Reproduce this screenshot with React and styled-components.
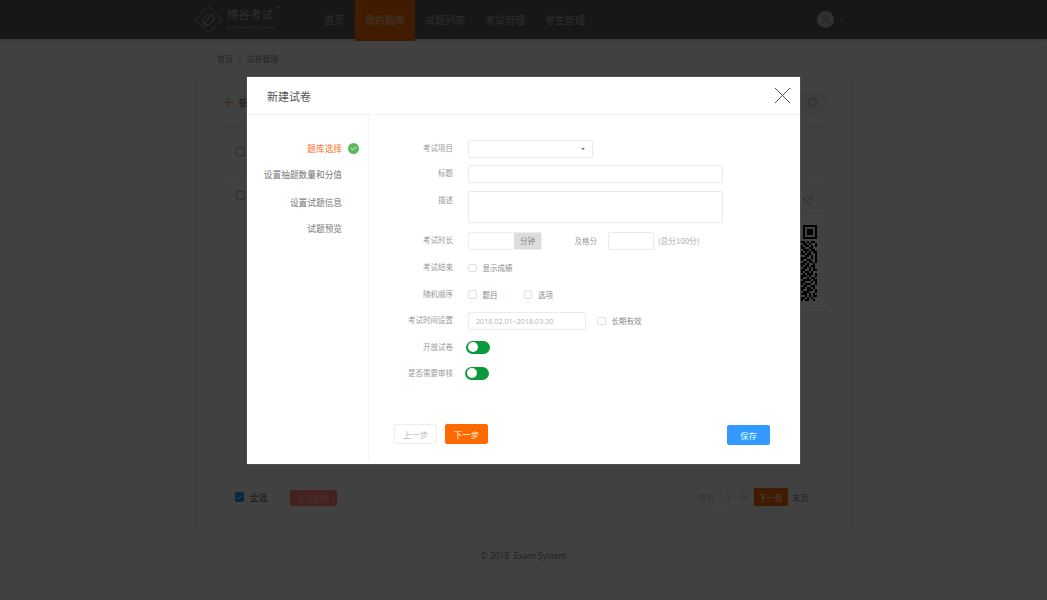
import React from "react";
import styled, { createGlobalStyle } from "styled-components";
import { Search, Send, Plus, Check, User, X } from "lucide-react";

const Global = createGlobalStyle`
  html, body { margin: 0; padding: 0; height: 100%; background: #eee; }
  body { font-family: "Noto Sans CJK SC", "Open Sans", "Noto Sans", sans-serif; overflow: hidden; }
  * { box-sizing: border-box; }
`;

const Page = styled.div`
  position: relative;
  width: 1047px;
  height: 600px;
  overflow: hidden;
  background: #eee;
`;
const Header = styled.header`
  height: 39px;
  background: #555;
  display: flex;
  padding-left: 194px;
  padding-right: 204px;
  box-shadow: 0 1px 2px rgba(0,0,0,.2);
`;
const Logo = styled.div`
  display: flex;
  align-items: center;
  gap: 4px;
  width: 120px;
  color: #aaa;
`;
const LogoText = styled.div`
  display: flex;
  flex-direction: column;
  line-height: 1;
`;
const LogoName = styled.span`
  font-size: 11.5px;
  position: relative;
  width: 47px;
  margin-bottom: 4px;
  sup {
    position: absolute;
    left: 48px;
    top: -7px;
    font-family: "Open Sans", sans-serif;
    font-size: 10px;
    font-weight: 300;
  }
`;
const LogoSub = styled.span`
  font-family: "Open Sans", sans-serif;
  font-size: 5.2px;
  color: #999;
  white-space: nowrap;
`;
const Nav = styled.nav`
  display: flex;
  flex: 1;
`;
const NavItem = styled.a`
  height: 41px;
  padding: 0 10px;
  line-height: 40px;
  font-size: 10px;
  color: ${(p) => (p.$active ? "#d8c8b8" : "#aaa")};
  background: ${(p) => (p.$active ? "#f06400" : "transparent")};
  &:first-child { margin-right: 1px; }
`;
const UserBox = styled.div`
  display: flex;
  align-items: center;
  gap: 5px;
`;
const Avatar = styled.div`
  width: 17px;
  height: 17px;
  border-radius: 50%;
  background: #b4b4b4;
  color: #666;
  display: flex;
  align-items: center;
  justify-content: center;
`;
const Caret = styled.i`
  width: 0;
  height: 0;
  border: 2px solid transparent;
  border-top-color: ${(p) => p.$color || "#888"};
  border-bottom: 0;
`;
const Crumbs = styled.div`
  height: 38px;
  padding: 0 0 0 217px;
  display: flex;
  align-items: center;
  gap: 5px;
  font-size: 8px;
  color: #888;
`;
const Card = styled.section`
  width: 656px;
  height: 456px;
  margin: 0 auto;
  background: #f1f1f1;
  border: 1px solid #eee;
  display: flex;
  flex-direction: column;
  box-shadow: 0 1px 2px rgba(0,0,0,.05);
`;
const Toolbar = styled.div`
  height: 50px;
  margin: 0 24px;
  border-bottom: 1px solid #e6e6e6;
  display: flex;
  align-items: center;
  justify-content: space-between;
  font-size: 10px;
  color: #777;
  padding-left: 27px;
`;
const NewBtn = styled.div`
  display: flex;
  align-items: center;
  gap: 4px;
  margin-left: -26px;
  color: #ff9800;
  span { color: #666; }
`;
const SearchPill = styled.div`
  width: 90px;
  height: 20px;
  margin-right: -1px;
  border-radius: 10px;
  background: #e4e4e4;
  color: #888;
  display: flex;
  align-items: center;
  justify-content: flex-end;
  padding-right: 9px;
`;
const ListRow = styled.div`
  margin: 0 24px;
  padding: ${(p) => p.$pad};
  height: ${(p) => p.$h}px;
  border-bottom: ${(p) => (p.$line ? "1px solid #e6e6e6" : "0")};
  display: flex;
  justify-content: space-between;
`;
const Check0 = styled.i`
  display: block;
  width: 9px;
  height: 9px;
  margin-left: 15px;
  margin-top: ${(p) => p.$mt || 0}px;
  border: 1px solid #aaa;
  border-radius: 2px;
`;
const QrCol = styled.div`
  display: flex;
  flex-direction: column;
  align-items: flex-end;
  color: #888;
`;
const QrBox = styled.div`
  width: 100px;
  height: 99px;
  margin-top: 7px;
  margin-right: -2px;
  padding: 11px;
  background: #f4f4f4;
  border: 1px solid #e4e4e4;
`;
const BulkBar = styled.div`
  margin-top: auto;
  height: 42px;
  padding: 0 37px 0 38px;
  display: flex;
  align-items: flex-start;
  font-size: 9px;
  color: #555;
`;
const CheckedBox = styled.i`
  width: 9px;
  height: 10px;
  margin-top: 2px;
  margin-right: 6px;
  background: #2a8fe0;
  border-radius: 2px;
  color: #fff;
  display: flex;
  align-items: center;
  justify-content: center;
`;
const BulkLabel = styled.span`
  margin-right: 22.5px;
  line-height: 15px;
`;
const DangerBtn = styled.button`
  width: 47px;
  height: 16px;
  padding: 0;
  border: 0;
  border-radius: 2px;
  background: #ff7878;
  color: #ffb0b0;
  font: inherit;
  font-size: 8px;
`;
const Pager = styled.div`
  margin-left: auto;
  margin-top: -2px;
  display: flex;
  font-size: 8px;
`;
const PageBtn = styled.span`
  height: 18px;
  line-height: 17px;
  padding: 0 4px;
  border: 1px solid ${(p) => (p.$on ? "#f06400" : "#eaeaea")};
  background: ${(p) => (p.$on ? "#f06400" : "transparent")};
  color: ${(p) => (p.$on ? "#fff" : p.$dim ? "#bbb" : "#777")};
`;
const Foot = styled.footer`
  text-align: center;
  margin-top: 17px;
  font-size: 8.5px;
  font-family: "Open Sans", sans-serif;
  color: #777;
`;

const Overlay = styled.div`
  position: absolute;
  inset: 0;
  background: rgba(0, 0, 0, 0.73);
  display: flex;
  justify-content: center;
  padding-top: 77px;
`;
const Modal = styled.div`
  width: 553px;
  height: 387px;
  background: #fff;
  display: flex;
  flex-direction: column;
  box-shadow: 0 0 1px rgba(255,255,255,.5);
`;
const ModalHead = styled.div`
  height: 38px;
  flex: none;
  padding: 0 3px 0 20px;
  border-bottom: 1px solid #f2f2f2;
  display: flex;
  align-items: center;
  justify-content: space-between;
  font-size: 11px;
  color: #555;
`;
const CloseBtn = styled.span`
  display: flex;
  color: #333;
`;
const ModalBody = styled.div`
  flex: 1;
  display: flex;
  min-height: 0;
`;
const Steps = styled.ol`
  width: 122px;
  flex: none;
  margin: 0 0 4px;
  padding: 26px 26px 0 0;
  list-style: none;
  border-right: 1px solid #f4f4f4;
  font-size: 8.7px;
  color: #777;
  text-align: right;
`;
const Step = styled.li`
  position: relative;
  height: ${(p) => p.$h}px;
  line-height: 16px;
  white-space: nowrap;
  color: ${(p) => (p.$active ? "#ff6a1f" : "#777")};
`;
const StepMark = styled.span`
  position: absolute;
  right: -17px;
  top: 2px;
  width: 11px;
  height: 11px;
  border-radius: 50%;
  background: #5cb85c;
  color: #fff;
  display: flex;
  align-items: center;
  justify-content: center;
`;
const FormArea = styled.div`
  flex: 1;
  display: flex;
  flex-direction: column;
  padding: 25px 30px 0 0;
`;
const Row = styled.div`
  display: flex;
  align-items: ${(p) => (p.$top ? "flex-start" : "center")};
  min-height: 17.5px;
  margin-bottom: ${(p) => p.$mb ?? 9}px;
`;
const Label = styled.label`
  width: 84px;
  flex: none;
  margin-right: 15px;
  padding-bottom: 2px;
  text-align: right;
  font-size: 7.5px;
  color: #999;
  white-space: nowrap;
  line-height: ${(p) => (p.$top ? "17px" : "inherit")};
`;
const Field = styled.div`
  width: ${(p) => p.$w}px;
  height: ${(p) => p.$h || 17.5}px;
  flex: none;
  margin-left: ${(p) => p.$ml || 0}px;
  padding: 0 7px;
  border: 1px solid #ebebeb;
  border-radius: 2px;
  display: flex;
  align-items: center;
  justify-content: ${(p) => (p.$end ? "flex-end" : "flex-start")};
  font-size: 7.2px;
  color: #b4b4b4;
  font-family: "Open Sans", sans-serif;
  background: #fff;
`;
const AddonField = styled.div`
  width: 74px;
  height: 17.5px;
  display: flex;
  border: 1px solid #eee;
  border-radius: 2px;
  overflow: hidden;
`;
const Addon = styled.span`
  margin-left: auto;
  width: 27px;
  background: #ddd;
  color: #888;
  font-size: 7.5px;
  line-height: 15px;
  text-align: center;
`;
const Hint = styled.span`
  font-size: 7.8px;
  color: #aaa;
  margin-left: ${(p) => p.$ml || 4}px;
  white-space: nowrap;
`;
const Side = styled.span`
  font-size: 7.5px;
  color: #999;
  margin-left: 32.4px;
  margin-right: 11px;
`;
const Box = styled.i`
  display: block;
  width: 8.5px;
  height: 8.5px;
  flex: none;
  border: 1px solid #e0e0e0;
  border-radius: 2px;
  margin-left: ${(p) => p.$ml || 0}px;
`;
const BoxText = styled.span`
  margin-left: 6px;
  font-size: 7.5px;
  color: #888;
  white-space: nowrap;
`;
const Toggle = styled.span`
  display: flex;
  align-items: center;
  width: 24px;
  height: 13px;
  margin-left: ${(p) => p.$ml}px;
  padding: 1.5px;
  border-radius: 7px;
  background: #0a9a3c;
  &::before {
    content: "";
    width: 10px;
    height: 10px;
    border-radius: 50%;
    background: #fff;
  }
`;
const Actions = styled.div`
  display: flex;
  align-items: flex-start;
  gap: 8px;
  margin-top: 42px;
  padding-left: 25px;
`;
const Btn = styled.button`
  width: ${(p) => p.$w || 43}px;
  height: ${(p) => p.$h || 20}px;
  padding: 0;
  margin-left: ${(p) => (p.$push ? "auto" : 0)};
  margin-top: ${(p) => p.$mt || 0}px;
  border-radius: 2px;
  border: 1px solid ${(p) => p.$bd};
  background: ${(p) => p.$bg};
  color: ${(p) => p.$fg};
  font-family: inherit;
  font-size: 8.5px;
`;

const Finder = ({ x, y }) => (
  <g>
    <rect x={x} y={y} width="7" height="7" />
    <rect x={x + 1} y={y + 1} width="5" height="5" fill="#f4f4f4" />
    <rect x={x + 2} y={y + 2} width="3" height="3" />
  </g>
);
const cols = [
  "11010110","01101001","10110101","11001100","01110110","10101011","11011001","00110101",
  "11100101","10011001","01101101","11010010","10110110","01101010","11001011","10110100",
  "01011101","11101001","10010110","01111011","11000101","10111001","01100110","11011010",
  "10011101","01110001","11101010","00101011","11010100","10110010",
];
const QrCode = () => (
  <svg width="76" height="76" viewBox="0 0 38 38" shapeRendering="crispEdges" fill="#000">
    <Finder x={0} y={0} />
    <Finder x={31} y={0} />
    <Finder x={0} y={31} />
    {cols.map((r, y) =>
      r.split("").map((c, x) =>
        c === "1" ? <rect key={`${x}-${y}`} x={30 + x} y={8 + y} width="1" height="1" /> : null
      )
    )}
  </svg>
);

const LogoMark = () => (
  <svg width="29" height="29" viewBox="0 0 29 29" fill="none" stroke="#aaa" strokeWidth="0.8">
    <rect x="5" y="5" width="19" height="19" rx="2" transform="rotate(45 14.5 14.5)" />
    <path d="M10 18l6-7a2.6 2.6 0 0 1 3.6 3.6l-6 6.2a2 2 0 0 1-3-2.6l5.5-6" />
    <ellipse cx="14.5" cy="14.5" rx="6" ry="4.4" transform="rotate(-40 14.5 14.5)" />
  </svg>
);

const App = () => (
  <Page>
    <Global />
    <Header>
      <Logo>
        <LogoMark />
        <LogoText>
          <LogoName>棒谷考试<sup>+</sup></LogoName>
          <LogoSub>Examination System</LogoSub>
        </LogoText>
      </Logo>
      <Nav>
        <NavItem>首页</NavItem>
        <NavItem $active>我的题库</NavItem>
        <NavItem>试题列表</NavItem>
        <NavItem>考试管理</NavItem>
        <NavItem>考生管理</NavItem>
      </Nav>
      <UserBox>
        <Avatar><User size={11} strokeWidth={1.5} /></Avatar>
        <Caret />
      </UserBox>
    </Header>
    <Crumbs>首页<span>/</span>试卷管理</Crumbs>
    <Card>
      <Toolbar>
        <NewBtn><Plus size={13} strokeWidth={2} /><span>新建试卷</span></NewBtn>
        <SearchPill><Search size={12} strokeWidth={1.3} /></SearchPill>
      </Toolbar>
      <ListRow $h={55} $pad="19px 0 0" $line><Check0 /></ListRow>
      <ListRow $h={140} $pad="12px 0 0">
        <Check0 $mt={-4} />
        <QrCol>
          <Send size={11} strokeWidth={1.2} style={{ marginRight: 14 }} />
          <QrBox><QrCode /></QrBox>
        </QrCol>
      </ListRow>
      <BulkBar>
        <CheckedBox><Check size={7} strokeWidth={3} /></CheckedBox>
        <BulkLabel>全选</BulkLabel>
        <DangerBtn>批量删除</DangerBtn>
        <Pager>
          <PageBtn $dim>首页</PageBtn>
          <PageBtn $dim>上一页</PageBtn>
          <PageBtn $on>下一页</PageBtn>
          <PageBtn>末页</PageBtn>
        </Pager>
      </BulkBar>
    </Card>
    <Foot>© 2018&nbsp; Exam System</Foot>
    <Overlay>
      <Modal>
        <ModalHead>
          新建试卷
          <CloseBtn><X size={29} strokeWidth={0.7} /></CloseBtn>
        </ModalHead>
        <ModalBody>
          <Steps>
            <Step $h={26} $active>题库选择<StepMark><Check size={7} strokeWidth={3} /></StepMark></Step>
            <Step $h={28}>设置抽题数量和分值</Step>
            <Step $h={26}>设置试题信息</Step>
            <Step $h={26}>试题预览</Step>
          </Steps>
          <FormArea>
            <Row $mb={7.5}>
              <Label>考试项目</Label>
              <Field $w={125} $end><Caret $color="#666" /></Field>
            </Row>
            <Row $mb={8.5}>
              <Label>标题</Label>
              <Field $w={255} />
            </Row>
            <Row $top>
              <Label $top>描述</Label>
              <Field $w={255} $h={32} />
            </Row>
            <Row $mb={9.5}>
              <Label>考试时长</Label>
              <AddonField><Addon>分钟</Addon></AddonField>
              <Side>及格分</Side>
              <Field $w={46} />
              <Hint>(总分100分)</Hint>
            </Row>
            <Row $mb={9}>
              <Label>考试结束</Label>
              <Box /><BoxText>显示成绩</BoxText>
            </Row>
            <Row $mb={9}>
              <Label>随机顺序</Label>
              <Box /><BoxText>题目</BoxText>
              <Box $ml={26} /><BoxText>选项</BoxText>
            </Row>
            <Row $mb={9}>
              <Label>考试时间设置</Label>
              <Field $w={118}>2018.02.01~2018.03.30</Field>
              <Box $ml={11} /><BoxText>长期有效</BoxText>
            </Row>
            <Row $mb={8.5}>
              <Label>开放试卷</Label>
              <Toggle $ml={-2} />
            </Row>
            <Row $mb={0}>
              <Label>是否需要审核</Label>
              <Toggle $ml={-3} />
            </Row>
            <Actions>
              <Btn $bd="#eee" $bg="#fff" $fg="#bbb">上一步</Btn>
              <Btn $bd="#ff6a00" $bg="#ff6a00" $fg="#ffe">下一步</Btn>
              <Btn $push $mt={1} $bd="#3399ff" $bg="#3399ff" $fg="#dff">保存</Btn>
            </Actions>
          </FormArea>
        </ModalBody>
      </Modal>
    </Overlay>
  </Page>
);

export default App;
